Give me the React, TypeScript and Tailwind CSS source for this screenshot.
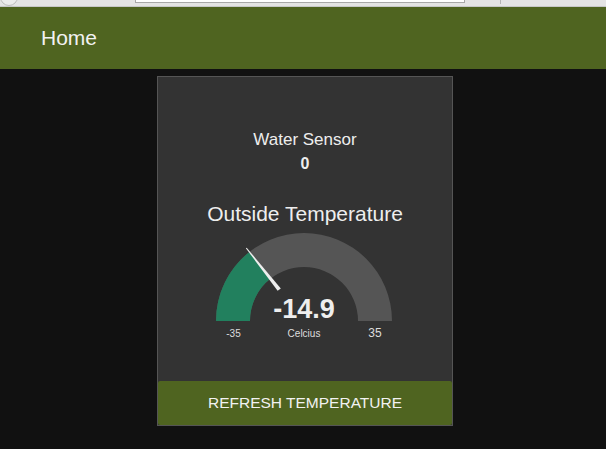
const font = { fontFamily: '"Liberation Sans", Arial, sans-serif' }

function Gauge() {
  // centre of the dial inside the svg
  const cx = 146
  const cy = 95
  return (
    <svg width="294" height="120" viewBox="0 0 294 120" className="block">
      <path
        d={`M ${cx - 88} ${cy} A 88 88 0 0 1 ${cx + 88} ${cy} L ${cx + 54} ${cy} A 54 54 0 0 0 ${cx - 54} ${cy} Z`}
        fill="#555555"
      />
      <path
        d={`M ${cx - 88} ${cy} A 88 88 0 0 1 91.4 25.9 L 112.5 52.6 A 54 54 0 0 0 ${cx - 54} ${cy} Z`}
        fill="#22805e"
      />
      <polygon points="122.8,62.4 119.6,64.8 87.9,22.3 88.7,21.7" fill="#eeeeee" />
      <text x={cx} y="92" textAnchor="middle" fill="#eeeeee" fontSize="27" fontWeight="bold" style={font}>
        -14.9
      </text>
      <text x="75.5" y="111" textAnchor="middle" fill="#dddddd" fontSize="10" style={font}>
        -35
      </text>
      <text x={cx} y="111" textAnchor="middle" fill="#dddddd" fontSize="10" style={font}>
        Celcius
      </text>
      <text x="217" y="111" textAnchor="middle" fill="#dddddd" fontSize="12" style={font}>
        35
      </text>
    </svg>
  )
}

export default function App() {
  return (
    <div className="w-[606px] h-[449px] bg-[#111111] overflow-hidden" style={font}>
      {/* browser chrome strip */}
      <div className="h-[7px] bg-[#e4e4e4] border-b border-[#c8c8c8] flex">
        <div className="w-[18px] h-[18px] -mt-[12px] rounded-full border border-[#bdbdbd] bg-[#ececec]" />
        <div className="ml-[117px] w-[330px] h-[3px] bg-white border border-t-0 border-[#a8a8a8]" />
        <div className="ml-[35px] w-px h-[4px] bg-[#b5b5b5]" />
      </div>

      {/* header */}
      <div className="h-[62px] bg-[#4f6420] flex items-center pl-[41px]">
        <span className="text-[21px] text-[#f2f2f2]">Home</span>
      </div>

      {/* card */}
      <div className="ml-[157px] mt-[7px] w-[296px] bg-[#333333] border border-[#555555] flex flex-col items-center">
        <div className="pt-[53px] text-[17px] leading-[20px] text-[#eeeeee]">Water Sensor</div>
        <div className="mt-[4px] text-[16px] leading-[20px] font-bold text-[#eeeeee]">0</div>
        <div className="mt-[28px] text-[21px] leading-[24px] text-[#eeeeee]">Outside Temperature</div>
        <Gauge />
        <button className="mt-[35px] w-full h-[44px] bg-[#4f6420] rounded-[2px] text-[15.5px] text-[#f2f2f2] uppercase">
          Refresh Temperature
        </button>
      </div>
    </div>
  )
}
